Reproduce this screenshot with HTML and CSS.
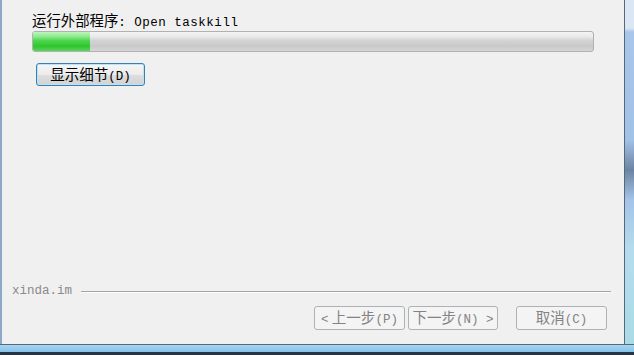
FILE: index.html
```html
<!DOCTYPE html>
<html lang="zh-CN">
<head>
    <meta charset="UTF-8">
    <title>运行外部程序</title>
    <link rel="stylesheet" href="styles.css">
</head>
<body>
    <div class="window">
        <div class="frame-row">
            <div class="frame-left"></div>

            <div class="content">
                <!-- Status -->
                <div class="status">运行外部程序<span class="mono">: Open taskkill</span></div>

                <div class="progress">
                    <div class="progress-fill" style="width: 57px;"></div>
                </div>

                <button class="details-btn">显示细节<span class="mono">(D)</span></button>

                <div class="spacer"></div>

                <!-- Footer -->
                <div class="brand-row">
                    <span class="brand">xinda.im</span>
                    <div class="rule"></div>
                </div>

                <div class="nav-buttons">
                    <button class="nav-btn prev" disabled><span class="mono">&lt;</span> 上一步<span class="mono">(P)</span></button>
                    <button class="nav-btn next" disabled>下一步<span class="mono">(N) &gt;</span></button>
                    <button class="nav-btn cancel" disabled>取消<span class="mono">(C)</span></button>
                </div>
            </div>

            <div class="frame-right"></div>
        </div>
        <div class="frame-bottom"></div>
    </div>
</body>
</html>
```

FILE: styles.css
```css
* {
    margin: 0;
    padding: 0;
    box-sizing: border-box;
}

body {
    width: 634px;
    height: 355px;
    overflow: hidden;
    background: #263443;
    font-family: "Noto Sans CJK SC", sans-serif;
    font-size: 14px;
    color: #000;
}

.window {
    display: flex;
    flex-direction: column;
    height: 352px;
}

.frame-row {
    display: flex;
    height: 344px;
}

.frame-left {
    width: 2px;
    background: #8ca9c6;
}

.frame-right {
    width: 10px;
    border-left: 1px solid #56687c;
    background: linear-gradient(#dbe7f4 0, #dbe7f4 28px, #a8c6ea 32px, #a2c1e6 140px, #6b84a2 170px, #a4c4e8 200px, #b5dcee 250px, #a9dbe6 100%);
}

.frame-bottom {
    height: 8px;
    border-top: 1px solid #56687c;
    background: linear-gradient(#a9d6f1, #84c2ea);
}

.content {
    flex: 1;
    display: flex;
    flex-direction: column;
    background: #f0f0f0;
    border-bottom: 1px solid #f0f0f0;
}

.mono {
    font-family: "Liberation Mono", "DejaVu Sans Mono", monospace;
    font-size: 12.5px;
}

.status {
    margin: 12px 0 0 30px;
    height: 16px;
    line-height: 16px;
    font-size: 14.4px;
    white-space: nowrap;
}

.status .mono {
    letter-spacing: 0.5px;
}

.progress {
    margin: 3px 0 0 30px;
    width: 562px;
    height: 21px;
    border: 1px solid #b1b1b1;
    border-radius: 3px;
    overflow: hidden;
    background: linear-gradient(#f4f4f4 0, #e9e9e9 25%, #d3d3d3 45%, #c9c9c9 75%, #d6d6d6 100%);
}

.progress-fill {
    height: 100%;
    background: linear-gradient(#bdf6bd 0, #8bea8b 25%, #4fd64f 45%, #2ec62e 75%, #5bd45b 100%);
}

.details-btn {
    margin: 11px 0 0 34px;
    width: 109px;
    height: 23px;
    border: 1px solid #3c7fb1;
    border-radius: 3px;
    box-shadow: inset 0 0 0 1px #b8e3f8;
    background: linear-gradient(#f6f6f6 0, #ececec 50%, #dedede 51%, #d2d2d2 100%);
    font-family: "Noto Sans CJK SC", sans-serif;
    font-size: 14.5px;
    line-height: 20px;
    color: #000;
}

.spacer {
    flex: 1;
}

.brand-row {
    display: flex;
    align-items: center;
    height: 14px;
    padding: 0 13px 0 10px;
}

.brand {
    font-family: "Liberation Mono", "DejaVu Sans Mono", monospace;
    font-size: 12.5px;
    color: #8a8a8a;
    margin-right: 9px;
}

.rule {
    flex: 1;
    margin-top: 2px;
    border-top: 1px solid #a5a5a5;
    border-bottom: 1px solid #fdfdfd;
}

.nav-buttons {
    display: flex;
    justify-content: flex-end;
    gap: 3px;
    margin: 8px 0 13px 0;
    padding-right: 17px;
}

.nav-btn {
    width: 91px;
    height: 24px;
    border: 1px solid #adb2b5;
    border-radius: 3px;
    background: #f4f4f4;
    color: #838383;
    font-family: "Noto Sans CJK SC", sans-serif;
    font-size: 14.5px;
    line-height: 20px;
    white-space: nowrap;
}

.nav-btn.prev {
    width: 91px;
}

.nav-btn.next {
    width: 90px;
}

.nav-btn.cancel {
    margin-left: 15px;
}
```
